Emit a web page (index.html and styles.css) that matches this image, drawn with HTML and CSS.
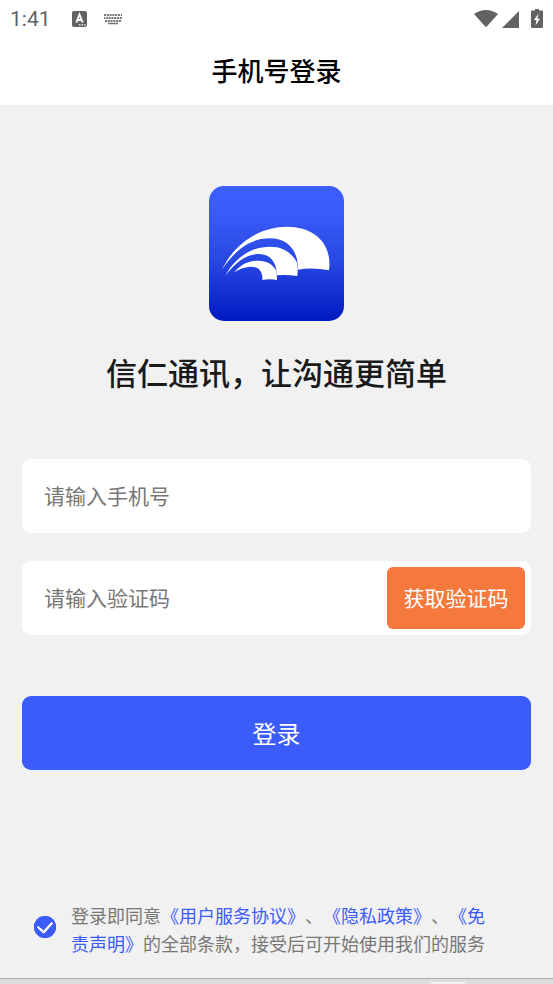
FILE: index.html
```html
<!DOCTYPE html>
<html lang="zh-CN">
<head>
<meta charset="utf-8">
<meta name="viewport" content="width=device-width, initial-scale=1">
<title>手机号登录</title>
<link rel="stylesheet" href="styles.css">
</head>
<body>
<div class="status">
  <span class="clock">1:41</span>
  <svg class="app-icon" viewBox="0 0 15 16" aria-hidden="true"><rect width="15" height="16" rx="2" fill="#626262"/><path d="M4.300 11.500 7.500 3.500 10.700 11.500M5.500 9h4" fill="none" stroke="#fff" stroke-width="1.900"/><path d="M7 13.300h1.500v1.300H7zM9.500 13.300H11v1.300H9.500zM12 13.300h1.500v1.300H12z" fill="#fff"/></svg>
  <svg class="keyboard-icon" viewBox="0 0 20 12" aria-hidden="true"><g fill="none" stroke="#747474" stroke-width="2"><path d="M1 2h18" stroke-dasharray="2 .8"/><path d="M1 5h18" stroke-dasharray="2 .8" stroke-dashoffset="1"/><path d="M2 8h16" stroke-dasharray="2 .8"/><path d="M5 10.500h10" stroke-width="1.500"/></g></svg>
  <svg class="signals" viewBox="0 0 72 22" aria-hidden="true"><g fill="#626262"><path d="M0 6Q12-2 24 6L12.800 18.500Q12 19.200 11.200 18.500Z"/><path d="M28 20 45 3V20Z"/><path d="M61 2.500V1h4v1.500h3q1 0 1 1V18.500q0 1.500-1.500 1.500h-9Q57 20 57 18.500V3.500q0-1 1-1Z"/></g><path d="M64.500 5.500 60 12h2.500L61.500 17.500 66 10.700h-2.500Z" fill="#fff"/></svg>
</div>
<header class="titlebar"><h1>手机号登录</h1></header>
<main>
  <svg class="logo" viewBox="0 0 405 405" role="img" aria-label="信仁通讯">
    <defs><linearGradient id="blue" x1="0" y1="0" x2="0" y2="1"><stop offset="0" stop-color="#3d5efb"/><stop offset=".2" stop-color="#3b5bf8"/><stop offset=".55" stop-color="#2848e4"/><stop offset="1" stop-color="#001bc1"/></linearGradient></defs>
    <rect width="405" height="405" rx="45" fill="url(#blue)"/>
    <g transform="translate(-27 -18)" fill="#fff">
      <path d="M66 269C106 186 183 140 261 140C342 140 398 190 387 271Q336 261 294 269C295 216 267 175 209 175C151 175 106 209 66 269Z"/>
      <path d="M76 287C108 228 158 200 211 200C249 200 275 218 292 249Q294 267 292 288Q260 283 230 286C231 245 209 222 176 222C138 222 107 247 76 287Z"/>
      <path d="M102 277C124 252 146 242 175 242C201 242 219 253 228 271Q231 284 231 300Q208 295 187 300C189 274 176 260 153 260Q128 261 102 277Z"/>
    </g>
  </svg>
  <p class="slogan">信仁通讯，让沟通更简单</p>
  <form>
    <div class="field"><input type="tel" aria-label="手机号" placeholder="请输入手机号"></div>
    <div class="field"><input type="text" aria-label="验证码" placeholder="请输入验证码"><button class="code" type="button">获取验证码</button></div>
    <button class="login" type="submit">登录</button>
    <div class="terms">
      <input id="agree" type="checkbox" checked>
      <label for="agree">登录即同意<a href="#service">《用户服务协议》</a>、<a href="#privacy">《隐私政策》</a>、<a href="#disclaimer">《免责声明》</a>的全部条款，接受后可开始使用我们的服务</label>
    </div>
  </form>
</main>
<div class="bottom-edge"><span></span></div>
</body>
</html>
```
FILE: styles.css
```css
* { box-sizing: border-box; }
body {
  margin: 0;
  min-height: 100vh;
  display: flex;
  flex-direction: column;
  background: #f1f1f1;
  font-family: "Noto Sans CJK SC", sans-serif;
  text-spacing-trim: space-all;
}
input, button { font: inherit; border: 0; }
.status {
  display: flex;
  align-items: center;
  height: 38px;
  padding: 0 7px 0 10px;
  background: #fff;
}
.clock { font: 21px/38px Roboto, sans-serif; color: #626262; }
.app-icon { width: 15px; height: 16px; margin-left: 21px; }
.keyboard-icon { width: 20px; height: 12px; margin-left: 16px; }
.signals { width: 72px; height: 22px; margin-left: auto; }
.titlebar {
  height: 67px;
  background: #fff;
  text-align: center;
}
h1 { margin: 0; font-size: 26px; line-height: 64px; font-weight: 500; color: #000; }
main {
  flex: 1;
  display: flex;
  flex-direction: column;
  align-items: center;
  padding: 81px 22px 20px;
}
.logo { width: 135px; height: 135px; }
.slogan {
  margin: 27px 0 63px;
  font-size: 31px;
  line-height: 48px;
  font-weight: 500;
  color: #1a1a1a;
}
form { width: 100%; }
.field {
  display: flex;
  height: 74px;
  margin-bottom: 28px;
  padding: 6px;
  border-radius: 9px;
  background: #fff;
}
.field input {
  flex: 1;
  min-width: 0;
  padding: 0 16px 2px;
  background: none;
  font-size: 21px;
  outline: none;
}
.field input::placeholder { color: #777; }
.code {
  width: 138px;
  padding: 0 0 2px;
  border-radius: 6px;
  background: #f5783c;
  color: #fff;
  font-size: 21px;
}
.login {
  display: block;
  width: 100%;
  height: 74px;
  margin-top: 61px;
  padding: 0 0 2px;
  border-radius: 9px;
  background: #3c5cfa;
  color: #fff;
  font-size: 24px;
}
.terms {
  display: flex;
  align-items: center;
  gap: 15px;
  margin: 131px 36px 0 12px;
  font-size: 18px;
  line-height: 28px;
  color: #777;
}
.terms input {
  appearance: none;
  flex: none;
  display: grid;
  place-items: center;
  width: 22px;
  height: 22px;
  margin: 0 0 4px;
  border-radius: 50%;
  box-shadow: inset 0 0 0 1px #3c5cfa;
}
.terms input:checked { background: #3c5cfa; }
.terms input:checked::before {
  content: "";
  width: 13px;
  height: 8px;
  margin-bottom: 4px;
  border: solid #fff;
  border-width: 0 0 3px 3px;
  border-radius: 1px;
  transform: rotate(-48deg) scale(.9);
}
.terms a { color: #3c5cfa; text-decoration: none; }
.bottom-edge {
  display: flex;
  align-items: flex-end;
  height: 6px;
  border-top: 1px solid #aaa;
  background: #dedede;
}
.bottom-edge span { width: 34px; height: 2px; margin-left: 78%; background: #f1f1f1; }
```
